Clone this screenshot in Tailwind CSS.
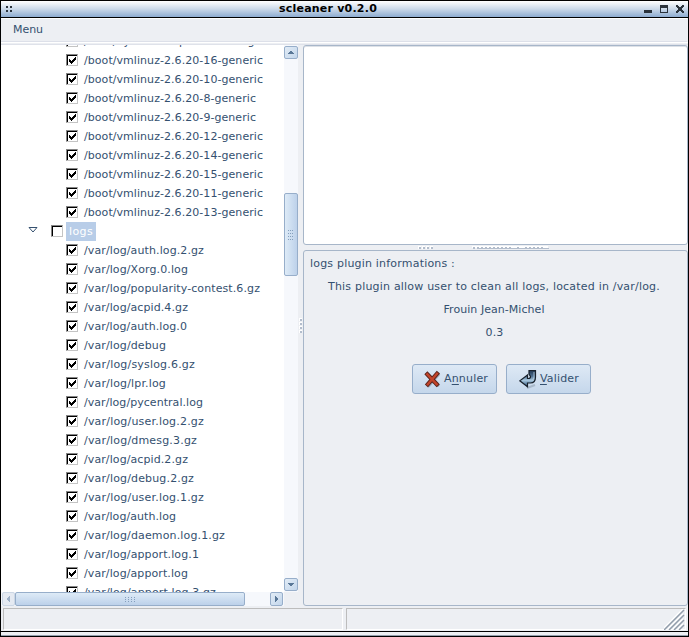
<!DOCTYPE html>
<html lang="en">
<head>
<meta charset="utf-8">
<title>scleaner v0.2.0</title>
<script src="https://cdn.jsdelivr.net/npm/@tailwindcss/browser@4"></script>
</head>
<body class="w-[689px] h-[637px] overflow-hidden bg-[#edeff3] text-[11px] leading-[19px] text-[#34506f] font-['DejaVu_Sans',sans-serif]">
<div class="flex flex-col w-[689px] h-[637px] border border-black overflow-hidden">
  <header class="relative flex items-center justify-end h-[17px] shrink-0 border-b border-black bg-linear-to-b from-white via-[#cbd9e9] to-[#8eacd0] pr-[3px] gap-[8px]">
    <svg class="absolute left-[5px] top-[5px]" width="7" height="6" fill="#2b333c" shape-rendering="crispEdges"><path d="M0 0h2v2H0zM4 0h2v2H4zM0 4h2v2H0zM4 4h2v2H4z"/></svg>
    <h1 class="absolute left-[278px] top-[-1px] leading-[17px] font-bold text-black whitespace-nowrap" data-w="98">scleaner v0.2.0</h1>
    <svg width="8" height="8" fill="#2b333c" shape-rendering="crispEdges"><path d="M0 5h8v3H0z"/></svg>
    <svg width="8" height="8" fill="#2b333c" shape-rendering="crispEdges"><path fill-rule="evenodd" d="M0 0h8v8H0zM1 3v4h6V3z"/></svg>
    <svg width="9" height="8" fill="#2b333c" shape-rendering="crispEdges"><path d="M0 0h2v1h1v1h2V1h1V0h2v2H7v1H6v2h1v1h1v2H6V7H5V6H3v1H2v1H0V6h1V5h1V3H1V2H0z"/></svg>
  </header>
  <nav class="flex items-center h-[24px] shrink-0 border-t border-white border-b border-b-[#dde0e9] pl-[12px] pb-px mr-px"><span data-w="30">Menu</span></nav>
  <div class="h-[3px] shrink-0 border-t border-white border-b border-b-[#dfe2ea]"></div>
  <main class="flex h-[562px] shrink-0">
    <section class="flex flex-col w-[297px] shrink-0">
      <div class="flex h-[547px]">
        <div class="w-[283px] h-[547px] overflow-hidden bg-white"><div id="tree" class="-mt-[13px]"></div></div>
        <div class="flex flex-col w-[14px] bg-[#f6f8fc]">
          <div class="flex items-center justify-center h-[13px] mt-px rounded-[2px] border border-[#97aeca] bg-linear-to-br from-[#e2ecf6] to-[#c3d6eb]"><svg width="6" height="3" fill="#597797" shape-rendering="crispEdges"><path d="M2 0h2v1h1v1h1v1H0V2h1V1h1z"/></svg></div>
          <div class="flex items-center justify-center h-[83px] mt-[134px] rounded-[2px] border border-[#97aeca] bg-linear-to-r from-[#deebf7] to-[#bdd1ea]"><svg width="6" height="10" fill="#849fbd" shape-rendering="crispEdges"><path d="M0 0h1v1H0zM2 0h1v1H2zM4 0h1v1H4zM0 3h1v1H0zM2 3h1v1H2zM4 3h1v1H4zM0 6h1v1H0zM2 6h1v1H2zM4 6h1v1H4zM0 9h1v1H0zM2 9h1v1H2zM4 9h1v1H4z"/></svg></div>
          <div class="flex items-center justify-center h-[13px] mt-auto mb-px rounded-[2px] border border-[#97aeca] bg-linear-to-br from-[#e2ecf6] to-[#c3d6eb]"><svg width="6" height="3" fill="#597797" shape-rendering="crispEdges"><path d="M0 0h6v1H5v1H4v1H2V2H1V1H0z"/></svg></div>
        </div>
      </div>
      <div class="flex w-[283px] h-[14px] bg-[#f6f8fc] pl-px pr-px">
        <div class="flex items-center justify-center w-[13px] rounded-[2px] border border-[#ccd7e5] bg-[#e5eaf2]"><svg width="3" height="6" fill="#9db0c7" shape-rendering="crispEdges"><path d="M2 0h1v6H2V5H1V4H0V2h1V1h1z"/></svg></div>
        <div class="flex items-center justify-center w-[230px] rounded-[2px] border border-[#97aeca] bg-linear-to-b from-[#deebf7] to-[#bdd1ea]"><svg width="10" height="5" fill="#849fbd" shape-rendering="crispEdges"><path d="M0 0h1v1H0zM3 0h1v1H3zM6 0h1v1H6zM9 0h1v1H9zM0 2h1v1H0zM3 2h1v1H3zM6 2h1v1H6zM9 2h1v1H9zM0 4h1v1H0zM3 4h1v1H3zM6 4h1v1H6zM9 4h1v1H9z"/></svg></div>
        <div class="flex items-center justify-center w-[13px] ml-auto rounded-[2px] border border-[#97aeca] bg-linear-to-br from-[#e2ecf6] to-[#c3d6eb]"><svg width="3" height="6" fill="#597797" shape-rendering="crispEdges"><path d="M0 0h1v1h1v1h1v2H2v1H1v1H0z"/></svg></div>
      </div>
    </section>
    <div class="flex items-center w-[5px] pl-[1px]"><svg width="4" height="16" shape-rendering="crispEdges"><path fill="#fff" d="M0 0h3v3H0zM0 4h3v3H0zM0 8h3v3H0zM0 12h3v3H0z"/><path fill="#b3bdcc" d="M1 1h2v2H1zM1 5h2v2H1zM1 9h2v2H1zM1 13h2v2H1z"/></svg></div>
    <section class="flex flex-col w-[385px]">
      <div class="h-[200px] rounded-[3px] border border-[#a7b6c9] shadow-[inset_0_1px_0_#dde1e7] bg-white"></div>
      <div class="h-[5px] pl-[115px] pt-px"><svg width="132" height="3" shape-rendering="crispEdges"><path fill="#fff" d="M0 0h3v3H0zM4 0h3v3H4zM8 0h3v3H8zM12 0h3v3h-3zM54 0h76v2H54z"/><path fill="#b3bdcc" d="M1 1h2v2H1zM5 1h2v2H5zM9 1h2v2H9zM13 1h2v2h-2zM55 1h2v2h-2zM59 2h72v1H59zM59 1h2v1h-2zM63 1h2v1h-2zM67 1h2v1h-2zM71 1h2v1h-2zM75 1h2v1h-2zM79 1h2v1h-2zM83 1h2v1h-2zM87 1h2v1h-2zM91 1h2v1h-2zM99 1h2v1h-2zM107 1h2v1h-2zM111 1h2v1h-2zM115 1h2v1h-2zM119 1h2v1h-2zM123 1h2v1h-2z"/></svg></div>
      <div class="flex flex-col h-[356px] rounded-[3px] border border-[#a7b6c9] bg-[#edeff3]">
        <p class="pl-[6px] mt-[3px] h-[19px]"><span data-w="145">logs plugin informations :</span></p>
        <p class="flex justify-center mt-[4px] h-[19px] pr-[3px]"><span data-w="332">This plugin allow user to clean all logs, located in /var/log.</span></p>
        <p class="flex justify-center mt-[4px] h-[19px] pr-[3px]"><span data-w="101">Frouin Jean-Michel</span></p>
        <p class="flex justify-center mt-[4px] h-[19px] pr-[2px]"><span data-w="18">0.3</span></p>
        <div class="flex gap-[9px] mt-[22px] ml-[108px]">
          <button class="flex items-center w-[85px] h-[30px] rounded-[3px] border border-[#97aeca] bg-linear-to-b from-[#dee9f5] to-[#c5d7eb] pl-[11px] gap-[3px]">
            <svg class="shrink-0" width="17" height="18" viewBox="0 0 17 18"><path d="M3.500 4.500l10 10.500M14 4.500L4.500 15.500" stroke="#8a97a8" stroke-width="4" stroke-linecap="round" opacity=".6"/><path d="M3.300 4.300l9.500 10M13 3.800L3.800 14.300" stroke="#5b241c" stroke-width="4.200" stroke-linecap="square"/><path d="M3.300 4.300l9.500 10M13 3.800L3.800 14.300" stroke="#c2442a" stroke-width="2.400" stroke-linecap="square"/></svg>
            <span class="-mt-px whitespace-nowrap" data-w="44">A<u class="underline-offset-2">n</u>nuler</span>
          </button>
          <button class="flex items-center w-[85px] h-[30px] rounded-[3px] border border-[#97aeca] bg-linear-to-b from-[#dee9f5] to-[#c5d7eb] pl-[12px] gap-[3px]">
            <svg class="shrink-0" width="18" height="20" viewBox="0 0 18 20"><defs><linearGradient id="arrow" x1="0" y1="0" x2="0" y2="1"><stop offset="0" stop-color="#1f3550"/><stop offset=".35" stop-color="#4d6f91"/><stop offset=".6" stop-color="#a9c8df"/><stop offset="1" stop-color="#254d76"/></linearGradient></defs><path d="M8 19l8-3" stroke="#8797a8" stroke-width="2" opacity=".5"/><path d="M10 1.500h6.500V8q0 6-5 6H8.500v3.800L.8 11.800 8.500 6v3.500h1q2 0 2-2L10 5z" fill="url(#arrow)" stroke="#18212c" stroke-width="1.200"/><path d="M15 3v5q0 2.500-2 3.500" fill="none" stroke="#b8cfdf" stroke-width=".8"/></svg>
            <span class="-mt-px whitespace-nowrap" data-w="39"><u class="underline-offset-2">V</u>alider</span>
          </button>
        </div>
      </div>
    </section>
  </main>
  <footer class="flex h-[24px] shrink-0 pt-px pl-[2px] pr-[2px] gap-[3px]">
    <div class="w-[340px] h-[22px] border border-white border-t-[#bcbcbc] border-l-[#bcbcbc]"></div>
    <div class="flex-1 h-[22px] border border-white border-t-[#bcbcbc] border-l-[#bcbcbc] flex justify-end"><svg width="21" height="21"><g stroke="#fff" stroke-width="1.500"><path d="M-1 20L19 0M4 20L19 5M9 20L19 10M14 20L19 15"/></g><g stroke="#929dab" stroke-width="1.500"><path d="M0 21L20 1M5 21L20 6M10 21L20 11M15 21L20 16"/></g></svg></div>
  </footer>
  <div class="h-[5px] shrink-0 border-t border-black border-b border-b-[#929dab] bg-[#edeff3]"></div>
</div>
<script>
const rows = [["/boot/System.map-2.6.20-16-generic",205],
["/boot/vmlinuz-2.6.20-16-generic",179],["/boot/vmlinuz-2.6.20-10-generic",179],["/boot/vmlinuz-2.6.20-8-generic",172],["/boot/vmlinuz-2.6.20-9-generic",172],["/boot/vmlinuz-2.6.20-12-generic",179],["/boot/vmlinuz-2.6.20-14-generic",179],["/boot/vmlinuz-2.6.20-15-generic",179],["/boot/vmlinuz-2.6.20-11-generic",179],["/boot/vmlinuz-2.6.20-13-generic",179],
["logs",24],
["/var/log/auth.log.2.gz",120],["/var/log/Xorg.0.log",104],["/var/log/popularity-contest.6.gz",176],["/var/log/acpid.4.gz",104],["/var/log/auth.log.0",103],["/var/log/debug",82],["/var/log/syslog.6.gz",111],["/var/log/lpr.log",82],["/var/log/pycentral.log",119],["/var/log/user.log.2.gz",120],["/var/log/dmesg.3.gz",113],["/var/log/acpid.2.gz",104],["/var/log/debug.2.gz",110],["/var/log/user.log.1.gz",120],["/var/log/auth.log",92],["/var/log/daemon.log.1.gz",141],["/var/log/apport.log.1",115],["/var/log/apport.log",104],["/var/log/apport.log.3.gz",132]];
const box = checked => `<span class="flex w-[12px] h-[12px] mt-[3px] shrink-0 border border-t-[#858585] border-l-[#858585] border-r-[#c4c4c4] border-b-[#c4c4c4]"><span class="w-[10px] h-[10px] border-t border-l border-black bg-white"><svg width="9" height="9" shape-rendering="crispEdges">${checked ? '<path d="M1 3h1v1h1v1h1V4h1V3h1V2h1V1h1v3H7v1H6v1H5v1H4v1H3V7H2V6H1z"/>' : ''}</svg></span></span>`;
document.getElementById('tree').innerHTML = rows.map(([name, w]) => name === 'logs'
  ? `<div class="flex items-start h-[19px] pl-[27px]"><svg class="mr-[13px] mt-[5px]" width="10" height="6"><path d="M1 .5h8L5 5z" fill="#fff" stroke="#34506f"/></svg>${box(false)}<span class="ml-[3px] w-[30px] h-[19px] pl-[3px] bg-[#b8cde8] text-white whitespace-nowrap"><span data-w="${w}">${name}</span></span></div>`
  : `<div class="flex items-start h-[19px] pl-[65px]">${box(true)}<span class="ml-[6px] whitespace-nowrap" data-w="${w}">${name}</span></div>`).join('');
// Spread each label over its given width
const pen = document.createElement('canvas').getContext('2d');
document.querySelectorAll('[data-w]').forEach(el => {
  pen.font = (el.tagName === 'H1' ? 'bold ' : '') + '11px "DejaVu Sans"';
  const text = el.textContent;
  el.style.whiteSpace = 'nowrap';
  el.style.letterSpacing = (el.dataset.w - pen.measureText(text).width) / text.length + 'px';
});
</script>
</body>
</html>
